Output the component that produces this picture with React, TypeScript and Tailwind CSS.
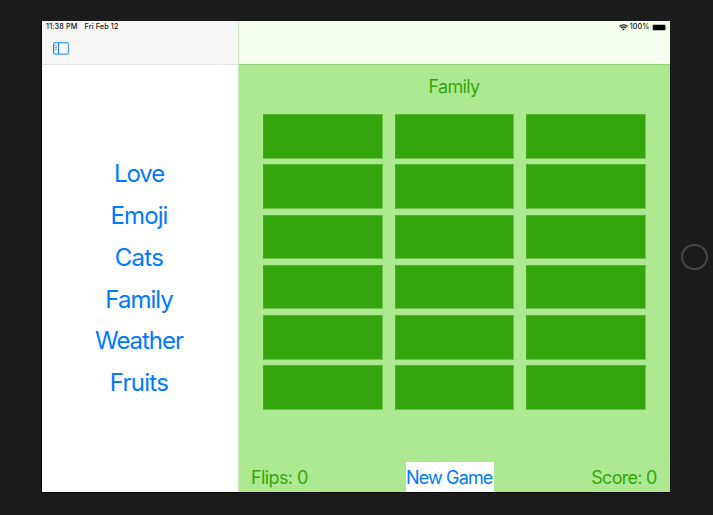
const themes = [
  { name: "Love", tracking: "tracking-[-1.1px]" },
  { name: "Emoji", tracking: "tracking-[-0.9px]" },
  { name: "Cats", tracking: "tracking-[-0.7px]" },
  { name: "Family", tracking: "tracking-[-1px]" },
  { name: "Weather", tracking: "tracking-[-1.05px]" },
  { name: "Fruits", tracking: "tracking-[-0.75px]" },
];

function SidebarIcon() {
  return (
    <svg width="16" height="13" viewBox="0 0 16 13" fill="none">
      <rect x="0.6" y="0.6" width="14.8" height="11.6" rx="1.5" stroke="#4a9dff" strokeWidth="1.2" />
      <path d="M5.5 0.6V12.2M0.6 2V11" stroke="#1482ff" strokeWidth="1" />
      <path d="M2 3.5H4M2 5.5H4M2 7.5H4" stroke="#3a95ff" strokeWidth="0.8" />
    </svg>
  );
}

function WifiIcon() {
  return (
    <svg width="9" height="7" viewBox="0 0 9 7" fill="none" stroke="#111">
      <path d="M0.5 2.5C2.8 0.3 6.2 0.3 8.5 2.5" strokeWidth="1.25" />
      <path d="M2 4.1C3.4 2.8 5.6 2.8 7 4.1" strokeWidth="1.15" />
      <path d="M3.2 5.1C4 4.4 5 4.4 5.8 5.1L4.5 6.5Z" fill="#111" stroke="none" />
    </svg>
  );
}

function BatteryIcon() {
  return (
    <svg width="16" height="7" viewBox="0 0 16 7">
      <rect x="0.4" y="0.4" width="13.4" height="6.2" rx="1.8" fill="#f4ffea" stroke="#929a8e" strokeWidth="0.7" />
      <rect x="1" y="1" width="12.2" height="5" rx="0.9" fill="#000" />
      <path d="M14.6 2.3Q15.6 3.5 14.6 4.7Z" fill="#8b9287" />
    </svg>
  );
}

function Sidebar() {
  return (
    <aside className="flex w-[196px] flex-col bg-white">
      <header className="h-[44px] border-b border-[#e3e3e3] bg-[#f6f6f6]">
        <div className="flex h-[12px] items-center gap-[7px] pl-[4px] text-[7.2px] leading-[12px] font-medium tracking-[0.15px] text-[#111]">
          <span>11:38 PM</span>
          <span>Fri Feb 12</span>
        </div>
        <div className="pt-[9px] pl-[11px]">
          <SidebarIcon />
        </div>
      </header>
      <nav className="flex flex-col items-center pt-[88.4px] pr-[2px] text-[24px] leading-[41.75px] text-[#007aff]">
        {themes.map((t) => (
          <button key={t.name} className={`h-[41.75px] ${t.tracking}`}>
            {t.name}
          </button>
        ))}
      </nav>
    </aside>
  );
}

function Game() {
  return (
    <main className="flex flex-1 flex-col border-l border-[#cde6bd] bg-[#ade990] text-[#35a50e]">
      <header className="h-[44px] shrink-0 border-b border-[#9bd480] bg-[#f6ffee]">
        <div className="flex h-[12px] items-center justify-end pr-[2.5px] text-[7.2px] font-medium tracking-[0.1px] text-[#111]">
          <WifiIcon />
          <span className="mr-[2px] ml-[2px]">100%</span>
          <BatteryIcon />
        </div>
      </header>
      <h1 className="h-[49px] pt-[9px] pr-px text-center text-[18px] leading-[26px] tracking-[-0.65px]">Family</h1>
      <div className="grid h-[296px] grid-cols-3 grid-rows-6 gap-x-[12px] gap-y-[5.8px] pr-[24.5px] pl-[24px]">
        {Array.from({ length: 18 }, (_, i) => (
          <button key={i} aria-label="card" className="border border-t-[#50b52b] border-r-[#70c24d] border-b-[#70c24d] border-l-[#43ad1e] bg-[#35a50e]" />
        ))}
      </div>
      <footer className="mt-auto flex h-[30px] items-center justify-between pr-[13.5px] pl-[12px] text-[18px]">
        <span className="w-[72px] tracking-[-0.6px]">Flips: 0</span>
        <button className="h-[30px] w-[88px] bg-white pt-px pr-px text-center tracking-[-0.85px] whitespace-nowrap text-[#007aff]">New Game</button>
        <span className="w-[80px] text-right tracking-[-0.75px]">Score: 0</span>
      </footer>
    </main>
  );
}

export default function App() {
  return (
    <div className="flex h-[515px] w-[713px] overflow-hidden bg-[#1b1b1b] pt-[21px] pl-[41px] font-['Inter',sans-serif]">
      <div className="flex h-[472px] w-[629px] shrink-0 border-b border-l border-black">
        <Sidebar />
        <Game />
      </div>
      <div className="flex h-[472px] w-[43px] justify-end pt-[223px] pr-[5px]">
        <div className="h-[26px] w-[27px] shrink-0 rounded-full border-2 border-[#474747]" />
      </div>
    </div>
  );
}
